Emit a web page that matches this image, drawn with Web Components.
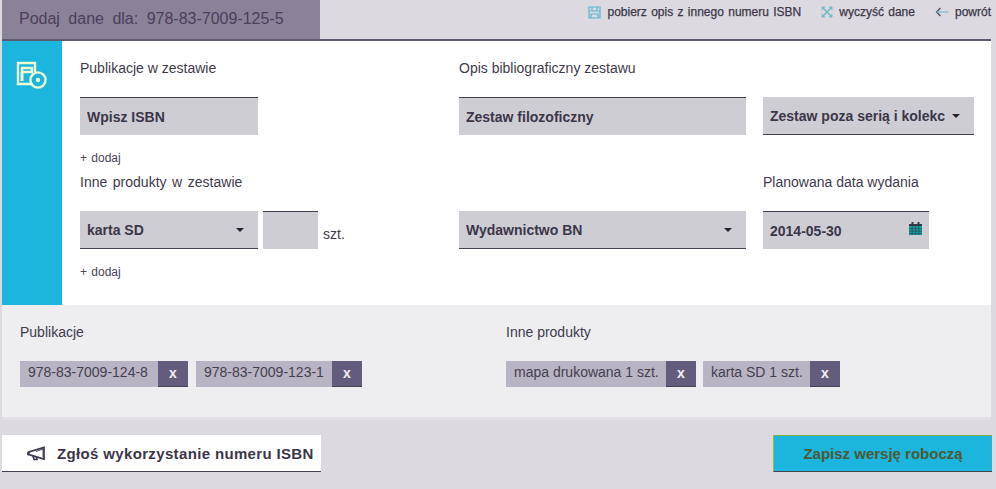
<!DOCTYPE html>
<html lang="pl">
<head>
<meta charset="utf-8">
<title>Podaj dane dla ISBN</title>
<style>
  html, body { margin: 0; padding: 0; }
  body {
    width: 996px;
    height: 489px;
    overflow: hidden;
    background: #dcdae0;
    font-family: "Liberation Sans", Arial, sans-serif;
    color: #3b3648;
  }
</style>
</head>
<body>
<isbn-topbar title-text="Podaj dane dla: 978-83-7009-125-5"></isbn-topbar>
<isbn-main></isbn-main>
<isbn-summary></isbn-summary>
<isbn-footer></isbn-footer>

<script>
// Inline icons used by several elements
const ICONS = {
    bundle: `<svg width="32" height="30" viewBox="0 0 32 30" fill="none" stroke="#eefad2" stroke-width="2.4">
        <path d="M19 23H2V2h17v9"/><path d="M6 7h10v4H6z" fill="#1bb5dd"/><path d="M6 11v9" stroke-width="3"/>
        <circle cx="22" cy="19" r="7.6" fill="#1bb5dd"/><circle cx="22" cy="19" r="2.2" fill="#eefad2" stroke="none"/></svg>`,
    fetch: `<svg width="13" height="13" viewBox="0 0 13 13" fill="none" stroke="#59b6d0" stroke-width="1.2">
        <path d="M1 1h11v11H1z"/><path d="M4 1v4h5V1M3 12V8h7v4M1 5h2M10 5h2"/></svg>`,
    clear: `<svg width="12" height="12" viewBox="0 0 11 11" fill="none" stroke="#6fb6c6" stroke-width="1.3">
        <path d="M1 1l9 9M10 1l-9 9"/><path d="M1 4V1h3M7 1h3v3M10 7v3H7M4 10H1V7" stroke-width=".9"/></svg>`,
    back: `<svg width="14" height="10" viewBox="0 0 13 10" fill="none" stroke="#4a4558" stroke-width="1.2">
        <path d="M5 1L1 5l4 4"/><path d="M1 5h12" stroke="#79b9c8"/></svg>`,
    megaphone: `<svg width="19" height="15" viewBox="0 0 19 15" fill="none" stroke="#3c3a4c" stroke-width="1.7">
        <path d="M17 1.5v11.5L2 8.5V6z"/><path d="M2 6.5h-1v2h1M6 10l1 3.5h3l-.6-2.4"/><path d="M9 5.5l7-2.5v8" fill="#fff" stroke-width=".9"/></svg>`,
    calendar: `<svg width="13" height="13" viewBox="0 0 13 13"><path fill="#2b3a44" d="M0 2h2.5V0h2v2h4V0h2v2H13v3H0z"/>
        <path fill="#169f9f" d="M0 4h13v9H0z"/>
        <path stroke="#2b4a52" stroke-width=".7" d="M0 6.7h13M0 9.2h13M0 11.7h13M3.2 4v9M6.5 4v9M9.8 4v9"/></svg>`
};

class IsbnTopbar extends HTMLElement {
    connectedCallback() {
        const root = this.attachShadow({ mode: "open" });
        root.innerHTML = `
        <style>
          :host { display: flex; height: 39px; margin-left: 2px; width: 989px; justify-content: space-between; }
          .tab {
            width: 318px; background: #8a8299; color: #4a3f5c; font-size: 16px; line-height: 18px;
            padding: 10px 0 0 17px; box-sizing: border-box; word-spacing: 4px; white-space: nowrap;
          }
          nav { display: flex; align-items: flex-start; padding-top: 5px; font-size: 12px; color: #3b3648; }
          a { display: flex; align-items: center; gap: 6px; margin-left: 20px; -webkit-text-stroke: .25px #3b3648; word-spacing: 1px; white-space: nowrap; }
        </style>
        <div class="tab">${this.getAttribute("title-text")}</div>
        <nav>
          <a>${ICONS.fetch}pobierz opis z innego numeru ISBN</a>
          <a>${ICONS.clear}wyczyść dane</a>
          <a>${ICONS.back}powrót</a>
        </nav>`;
    }
}

// Grey form box: text input or select, with dark line on top or bottom
class IsbnField extends HTMLElement {
    connectedCallback() {
        const root = this.attachShadow({ mode: "open" });
        const line = this.getAttribute("line") || "top";
        const arrow = this.hasAttribute("arrow") ? `<i class="arrow"></i>` : "";
        const cal = this.hasAttribute("calendar") ? `<span class="cal">${ICONS.calendar}</span>` : "";
        root.innerHTML = `
        <style>
          :host {
            display: flex; align-items: center; box-sizing: border-box; height: 38px;
            background: #cfcdd4; color: #3b3648; font-size: 14px; font-weight: 700;
            padding: 0 7px; white-space: nowrap; overflow: hidden;
            border-${line}: 1px solid #45424f;
          }
          .txt { flex: 1; overflow: hidden; }
          .arrow { flex: none; width: 0; height: 0; border: 4px solid transparent; border-top-color: #25222e; border-bottom: 0; margin: 0 7px 0 6px; }
          .cal { display: flex; margin: -5px 0 0 0; }
        </style>
        <span class="txt"><slot></slot></span>${arrow}${cal}`;
    }
}

class IsbnMain extends HTMLElement {
    connectedCallback() {
        const root = this.attachShadow({ mode: "open" });
        root.innerHTML = `
        <style>
          :host { display: flex; width: 989px; margin-left: 2px; background: #fff; border-top: 2px solid #5f5a70; box-sizing: border-box; height: 266px; }
          .side { width: 60px; flex: none; background: #1bb5dd; padding: 20px 0 0 14px; box-sizing: border-box; }
          form {
            flex: 1; display: grid; padding: 19px 0 0 18px; align-content: start;
            grid-template-columns: 379px 304px 211px;
            grid-template-rows: 16px 21px 38px 39px 16px 21px 38px 40px;
            grid-template-areas:
              "l1 l2 ."
              ". . ."
              "a b c"
              "d1 . ."
              "l3 . l4"
              ". . ."
              "e f g"
              "d2 . .";
          }
          .lab { font-size: 14px; color: #3f3b4c; line-height: 16px; white-space: nowrap; }
          .add { font-size: 12px; color: #4a4558; padding-top: 16px; word-spacing: 1px; line-height: 14px; }
          .row { display: flex; align-items: flex-end; gap: 5px; }
          .szt { font-size: 14px; color: #3f3b4c; margin: 0 0 7px 0; }
        </style>
        <div class="side">${ICONS.bundle}</div>
        <form>
          <div class="lab" style="grid-area:l1">Publikacje w zestawie</div>
          <div class="lab" style="grid-area:l2">Opis bibliograficzny zestawu</div>
          <isbn-field style="grid-area:a;width:178px">Wpisz ISBN</isbn-field>
          <isbn-field style="grid-area:b;width:287px">Zestaw filozoficzny</isbn-field>
          <isbn-field style="grid-area:c" line="bottom" arrow>Zestaw poza serią i kolekc</isbn-field>
          <div class="add" style="grid-area:d1">+ dodaj</div>
          <div class="lab" style="grid-area:l3;word-spacing:1.7px">Inne produkty w zestawie</div>
          <div class="lab" style="grid-area:l4">Planowana data wydania</div>
          <div class="row" style="grid-area:e">
            <isbn-field style="width:178px" line="bottom" arrow>karta SD</isbn-field>
            <isbn-field style="width:55px"></isbn-field>
            <span class="szt">szt.</span>
          </div>
          <isbn-field style="grid-area:f;width:287px" line="bottom" arrow>Wydawnictwo BN</isbn-field>
          <isbn-field style="grid-area:g;width:166px" calendar>2014-05-30</isbn-field>
          <div class="add" style="grid-area:d2">+ dodaj</div>
        </form>`;
    }
}

class IsbnTag extends HTMLElement {
    connectedCallback() {
        const root = this.attachShadow({ mode: "open" });
        root.innerHTML = `
        <style>
          :host { display: flex; height: 26px; background: #b9b4c4; color: #45404f; font-size: 14px; white-space: nowrap; }
          .t { padding: 0 0 0 8px; line-height: 23px; flex: 1; min-width: 0; overflow: hidden; }
          b { width: 30px; flex: none; background: #645c7c; color: #f2f1f5; font: 700 14px/25px "Liberation Sans", Arial, sans-serif; text-align: center; border-bottom: 1px solid #45424f; box-sizing: border-box; }
        </style>
        <span class="t"><slot></slot></span><b>x</b>`;
    }
}

class IsbnSummary extends HTMLElement {
    connectedCallback() {
        const root = this.attachShadow({ mode: "open" });
        root.innerHTML = `
        <style>
          :host { display: grid; grid-template-columns: 486px 1fr; width: 989px; height: 115px; margin-left: 2px; padding: 19px 0 0 18px; box-sizing: border-box; background: #eeedf0; border-bottom: 3px solid #e2e0e6; }
          h3 { margin: 0 0 21px; font-size: 14px; font-weight: 400; line-height: 16px; color: #3f3b4c; }
          .tags { display: flex; }
          .a isbn-tag + isbn-tag { margin-left: 8px; }
          .b isbn-tag + isbn-tag { margin-left: 7px; }
        </style>
        <div class="a"><h3>Publikacje</h3>
          <div class="tags">
            <isbn-tag style="width:168px">978-83-7009-124-8</isbn-tag>
            <isbn-tag style="width:166px">978-83-7009-123-1</isbn-tag>
          </div>
        </div>
        <div class="b"><h3>Inne produkty</h3>
          <div class="tags">
            <isbn-tag style="width:190px;flex:none">mapa drukowana 1 szt.</isbn-tag>
            <isbn-tag style="width:137px;flex:none">karta SD 1 szt.</isbn-tag>
          </div>
        </div>`;
    }
}

class IsbnFooter extends HTMLElement {
    connectedCallback() {
        const root = this.attachShadow({ mode: "open" });
        root.innerHTML = `
        <style>
          :host { display: flex; justify-content: space-between; width: 990px; margin: 15px 0 0 2px; }
          div { height: 37px; box-sizing: border-box; border-bottom: 1px solid #45424f; display: flex; align-items: center; font-size: 15px; font-weight: 700; color: #3b3648; }
          .report { width: 319px; background: #fff; padding-left: 25px; gap: 11px; letter-spacing: .35px; }
          .save { width: 219px; background: #1bb5dd; justify-content: center; border-top: 1px solid #7fb33c; border-left: 1px solid #9dbb3a; color: #4d5a34; }
        </style>
        <div class="report">${ICONS.megaphone}Zgłoś wykorzystanie numeru ISBN</div>
        <div class="save">Zapisz wersję roboczą</div>`;
    }
}

customElements.define("isbn-topbar", IsbnTopbar);
customElements.define("isbn-field", IsbnField);
customElements.define("isbn-main", IsbnMain);
customElements.define("isbn-tag", IsbnTag);
customElements.define("isbn-summary", IsbnSummary);
customElements.define("isbn-footer", IsbnFooter);
</script>
</body>
</html>
